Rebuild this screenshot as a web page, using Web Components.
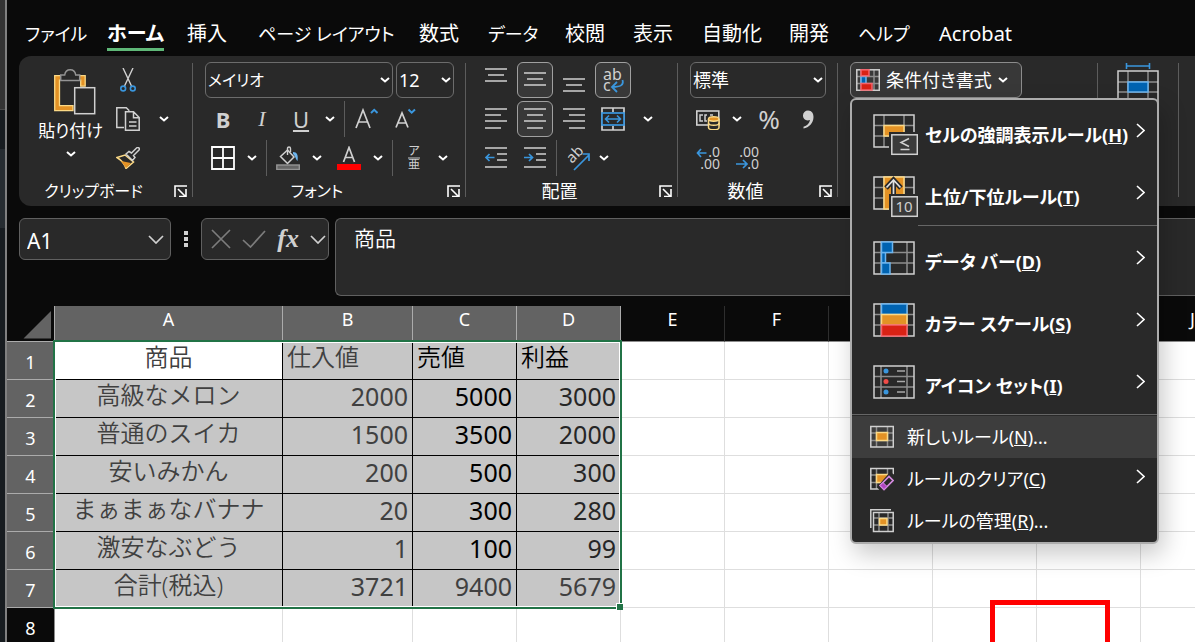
<!DOCTYPE html>
<html lang="ja">
<head>
<meta charset="utf-8">
<title>商品 - 表計算</title>
<style>
  html, body { margin: 0; height: 100%; overflow: hidden; background: #0a0a0a; }
  body { font-family: "Noto Sans", "Noto Sans CJK JP", sans-serif; font-feature-settings: "palt"; color: #fff; }
</style>
</head>
<body>
<sheet-window></sheet-window>
<script>
const G = '#d0d0d0', B = '#3a96dd';
const lines = list => `<path stroke="${G}" stroke-width="1.5" fill="none" d="${list.map(([x, y, w]) => `M${x} ${y}h${w}`).join('')}"/>`;
const grid = (x, y, w, h, cols, rows) =>
  `<path stroke="#8d8d8d" stroke-width="1.5" fill="none" d="${cols.map(c => `M${c} ${y}v${h}`).join('')}${rows.map(r => `M${x} ${r}h${w}`).join('')}"/>` +
  `<rect x="${x}" y="${y}" width="${w}" height="${h}" fill="none" stroke="${G}" stroke-width="1.5"/>`;
const box = (x, y, w, h, f, s) => `<rect x="${x}" y="${y}" width="${w}" height="${h}" fill="${f}" stroke="${s}" stroke-width="1.5"/>`;
const OR = '#e39225', OL = '#fbd986', BL = '#0063b1', BLL = '#6db5ee', RD = '#d92215', RL = '#f4646c';

const ICONS = {
  chevron: [10, 6, `<path d="M1 1l4 3.500 4-3.500" fill="none" stroke="#fff" stroke-width="2"/>`],
  chevronWide: [16, 9, `<path d="M1 1l7 7 7-7" fill="none" stroke="#d0d0d0" stroke-width="1.700"/>`],
  chevronRight: [9, 15, `<path d="M1 1l7 6.500L1 14" fill="none" stroke="#fff" stroke-width="1.600"/>`],
  launcher: [13, 12, `<path d="M1 12V1h12" fill="none" stroke="#fff" stroke-width="1.600"/><path d="M4 4l7 7M12 4v7.500H5" fill="none" stroke="#fff" stroke-width="1.600"/>`],
  paste: [50, 46, `<g transform="translate(8)"><path d="M.7 6.700h30.500v10.500h-4.500v-6H5.500v25.500H19v5H.7z" fill="${OR}" stroke="${OL}" stroke-width="1.300"/><path d="M6.700 11.500V6h4c1-7 10-7 11 0h4v5.500z" fill="#292929" stroke="#949494" stroke-width="1.500"/><rect x="20.700" y="18.700" width="20" height="26" fill="#292929" stroke="${G}" stroke-width="1.500"/></g>`],
  cut: [16, 24, `<path d="M3 0l8.500 18M13 0L4.500 18" stroke="${G}" stroke-width="1.400" fill="none"/><circle cx="3.200" cy="20.500" r="2.400" fill="none" stroke="${B}" stroke-width="1.600"/><circle cx="12.800" cy="20.500" r="2.400" fill="none" stroke="${B}" stroke-width="1.600"/>`],
  copy: [24, 24, `<path d="M8 20.500H.8V.8h9.500l3 3" fill="none" stroke="${G}" stroke-width="1.500"/><path d="M9.500 4.800h8l5.700 5.700v12.700H9.500zM17.500 4.800v6h5.700M13 15h7.500M13 19h7.500" fill="none" stroke="${G}" stroke-width="1.500"/>`],
  brush: [24, 22, `<path d="M1 10.500L9 8l8.500 7L10 21.500C9 18 5 13 1 10.500z" fill="#292929" stroke="${OL}" stroke-width="1.500"/><path d="M5 14l10 2-5 5z" fill="${OR}"/><path d="M10 7l3-2.500 2.500 1.500 5-5c2-1.500 3.500.5 2.500 2l-5.500 5.500 1.500 2-2.500 3z" fill="#292929" stroke="${G}" stroke-width="1.500"/>`],
  borders: [24, 24, `<path d="M1 1h22v22H1zM12 1v22M1 12h22" fill="none" stroke="#fff" stroke-width="1.800"/>`],
  bucket: [24, 24, `<path d="M4.500 10.500l7-6.500 6.500 7-6.500 6.500z" fill="none" stroke="${G}" stroke-width="1.500"/><path d="M11.500 9V2.500C11.500.5 14.500.5 14.500 2.500V6" fill="none" stroke="${G}" stroke-width="1.400"/><path d="M17 6c4 0 5.500 3 4.500 9-2-2-1.500-4-4.500-7z" fill="#6db5ee"/><rect x=".8" y="19" width="22.500" height="4.500" fill="#666" stroke="#949494" stroke-width="1.400"/>`],
  fontColor: [24, 24, `<path d="M6.500 16L12 1.500 17.500 16M8.500 11.500h7" fill="none" stroke="${G}" stroke-width="1.700"/><rect x="0" y="18" width="24" height="6" fill="#f00"/>`],
  grow: [24, 24, `<path d="M2 21L9 3l7 18M4.500 15h9" fill="none" stroke="${G}" stroke-width="1.700"/><path d="M17 6l3.200-3.200L23.500 6" fill="none" stroke="${B}" stroke-width="2"/>`],
  shrink: [24, 24, `<path d="M3 20.500L9 6l6 14.500M5 16h8" fill="none" stroke="${G}" stroke-width="1.700"/><path d="M15.500 2.500l3.200 3.200L22 2.500" fill="none" stroke="${B}" stroke-width="2"/>`],
  phonetic: [16, 26, `<text x="8" y="10" text-anchor="middle" font-size="12" fill="${G}">ア</text><path d="M2 13h12" stroke="#949494" stroke-width="1.500"/><text x="8" y="24" text-anchor="middle" font-size="12" fill="${G}">亜</text>`],
  top: [24, 24, lines([[1, 1, 22], [4, 7, 16], [1, 13, 22]])],
  middle: [24, 24, lines([[1, 5, 22], [4, 11, 16], [1, 17, 22]])],
  bottom: [24, 24, lines([[1, 11, 22], [4, 17, 16], [1, 23, 22]])],
  left: [24, 24, lines([[1, 2, 22], [1, 8, 16], [1, 14, 22], [1, 21, 16]])],
  center: [24, 24, lines([[1, 2, 22], [4, 8, 16], [1, 14, 22], [4, 21, 16]])],
  right: [24, 24, lines([[1, 2, 22], [7, 8, 16], [1, 14, 22], [7, 21, 16]])],
  outdent: [24, 24, lines([[1, 2, 22], [13, 8, 10], [13, 14, 10], [1, 21, 22]]) + `<path d="M10.500 11.500H2M5.500 8L2 11.500 5.500 15" fill="none" stroke="${B}" stroke-width="1.700"/>`],
  indent: [24, 24, lines([[1, 2, 22], [13, 8, 10], [13, 14, 10], [1, 21, 22]]) + `<path d="M1 11.500h8.500M6 8l3.500 3.500L6 15" fill="none" stroke="${B}" stroke-width="1.700"/>`],
  wrap: [24, 26, `<text x="2" y="13" font-size="16" fill="${G}">ab</text><text x="2" y="24" font-size="16" fill="${G}">c</text><path d="M21.500 13c1.500 5-2 7-10 7M16 15l-5 5 5 5" fill="none" stroke="${B}" stroke-width="1.800"/>`],
  merge: [24, 24, `<path d="M1 1h22v22H1zM12 1v4M12 19v4" fill="none" stroke="${G}" stroke-width="1.700"/><rect x="1" y="6" width="22" height="12" fill="#292929" stroke="${B}" stroke-width="1.700"/><path d="M4.500 12h15M8 8.500L4.500 12 8 15.500M16 8.500l3.500 3.500-3.500 3.500" fill="none" stroke="${B}" stroke-width="1.600"/>`],
  orient: [28, 26, `<text transform="translate(8 19) rotate(-45)" font-size="15" fill="${G}">ab</text><path d="M10 25L25 10M18.500 9H25v7" fill="none" stroke="${B}" stroke-width="1.700"/>`],
  money: [24, 22, `<rect x=".8" y="3" width="22" height="14" fill="none" stroke="${G}" stroke-width="1.600"/><path d="M7 7H4v6h3M11 7H9v6h2M14 7h3" fill="none" stroke="${G}" stroke-width="1.500"/><path d="M12.500 11v8.500c0 3 10.500 3 10.500 0V11" fill="#292929" stroke="${OL}" stroke-width="1.500"/><path d="M12.500 15c0 3 10.500 3 10.500 0" fill="none" stroke="${OL}" stroke-width="1.500"/><ellipse cx="17.700" cy="11" rx="5.200" ry="2.200" fill="${OR}" stroke="${OL}" stroke-width="1.500"/>`],
  comma: [14, 20, `<path d="M2 6.500a5 5 0 0 1 5-5c4 0 5.500 3 5.500 6.500 0 6-4.500 10.500-10 11.500v-1.700c3.500-1.300 6-3.500 6.500-6.800C5 12.500 2 10 2 6.500z" fill="${G}"/>`],
  moreDec: [24, 26, `<path d="M10.500 8H1.500M5 4L1.500 8 5 12" fill="none" stroke="${B}" stroke-width="1.700"/><text x="24" y="12" text-anchor="end" font-size="14" fill="${G}">.0</text><text x="24" y="24" text-anchor="end" font-size="14" fill="${G}">.00</text>`],
  lessDec: [24, 26, `<path d="M1 19h10.500M8 15l4 4-4 4" fill="none" stroke="${B}" stroke-width="1.700"/><text x="24" y="12" text-anchor="end" font-size="14" fill="${G}">.00</text><text x="24" y="24" text-anchor="end" font-size="14" fill="${G}">.0</text>`],
  condFormat: [24, 22, grid(.8, .8, 22.500, 20.500, [5, 18], [7.500, 14.500]) + box(5, 7.500, 5, 7, BL, BLL) + box(5, .8, 8, 6, RD, RL) + box(5, 14.500, 11, 6.500, RD, RL)],
  cellFormat: [42, 46, `<path d="M9.500 3h23M9.500 0v6M32.500 0v6" stroke="${B}" stroke-width="1.600" fill="none"/>` + grid(1, 8, 40, 38, [11, 31], [19, 29]) + box(11, 19, 20, 10, BL, BLL)],
  ruleHighlight: [45, 42, grid(1, 1, 40, 32, [11, 31], [11.500, 22]) + box(11, 11.500, 20, 10.500, OR, OL) + `<rect x="16" y="18" width="29" height="24" fill="#292929"/>` + box(18.800, 20.800, 25.500, 19.500, '#3a3a3a', G) + `<path d="M36 24.500l-8 4 8 4M27.500 35.500h9" fill="none" stroke="${G}" stroke-width="1.500"/>`],
  ruleTop: [45, 42, grid(1, 1, 40, 32, [11, 31], [11.500, 22]) + box(11, 1, 20, 32, OR, OL) + `<path d="M20.500 20V4M13 12l7.500-8 7.500 8" fill="none" stroke="#292929" stroke-width="5"/><path d="M20.500 20V4M13.500 11.500l7-7.500 7 7.500" fill="none" stroke="#e0e0e0" stroke-width="1.700"/><rect x="16" y="18" width="29" height="24" fill="#292929"/>` + box(18.800, 20.800, 25.500, 19.500, '#3a3a3a', G) + `<text x="31" y="36" text-anchor="middle" font-size="15" fill="${G}">10</text>`],
  dataBar: [45, 42, grid(1, 1, 40, 32, [8, 34], [11.500, 22]) + box(8.500, 11.500, 4, 10.500, BL, BLL) + box(8.500, 1, 11, 10.500, BL, BLL) + box(8.500, 22, 8.500, 11, BL, BLL)],
  colorScale: [45, 42, grid(1, 1, 40, 32, [8, 34], [11.500, 22]) + box(8.500, 1, 25.500, 10.500, BL, BLL) + box(8.500, 11.500, 25.500, 10.500, OR, OL) + box(8.500, 22, 25.500, 11, RD, RL)],
  iconSet: [45, 42, grid(1, 1, 40, 32, [8, 34], [11.500, 22]) + `<circle cx="13" cy="6" r="2.500" fill="${B}"/><circle cx="13" cy="16.500" r="2.500" fill="#f04c48"/><circle cx="13" cy="27" r="2.500" fill="${B}"/><path d="M24 6h8M24 16.500h8M24 27h8" stroke="#a8a8a8" stroke-width="1.500"/>`],
  ruleNew: [24, 24, grid(.8, 1.500, 22.500, 20.500, [6.500, 17.500], [8, 15.500]) + box(6.500, 7.500, 11, 8, OR, OL)],
  ruleClear: [24, 24, grid(.8, 1.500, 22.500, 20.500, [6.500, 17.500], [8, 15.500]) + box(6.500, 7.500, 11, 8, OR, OL) + `<path d="M7 20L20 5l5 3v16H10z" fill="#292929"/><path d="M10 18.500L19 9.500l4 4-9 9z" fill="none" stroke="#d58be0" stroke-width="1.600"/><path d="M10 18.500l3-3 4 4-3 3z" fill="#b146c2" stroke="#d58be0"/>`],
  ruleManage: [24, 24, `<path d="M.8 19V.8H21" fill="none" stroke="${G}" stroke-width="1.500"/>` + grid(3.500, 3.500, 19.700, 19, [9, 18], [9, 16]) + box(9.500, 9.500, 7.500, 6.500, OR, OL)],
  cancel: [20, 20, `<path d="M1 1l18 18M19 1L1 19" stroke="#7c7c7c" stroke-width="1.700"/>`],
  accept: [24, 18, `<path d="M1 10l7.500 7L23 1" fill="none" stroke="#7c7c7c" stroke-width="1.700"/>`],
  dots: [4, 18, `<path d="M0 1h4v4H0zM0 7h4v4H0zM0 13h4v4H0z" fill="${G}"/>`]
};

function define(name, render) {
  customElements.define(name, class extends HTMLElement {
    connectedCallback() {
      if (this.shadowRoot) return;
      const t = document.createElement('template');
      t.innerHTML = render(this);
      this.attachShadow({ mode: 'open' }).append(t.content.cloneNode(true));
    }
  });
}

define('ui-icon', el => {
  const [w, h, art] = ICONS[el.getAttribute('name')];
  return `<style>:host{display:inline-flex;flex:none}svg{display:block}text{font-family:"Noto Sans","Noto Sans CJK JP",sans-serif;font-weight:400}</style>
  <svg width="${w}" height="${h}" viewBox="0 0 ${w} ${h}" aria-hidden="true">${art}</svg>`;
});

define('tool-button', el => `<style>
  :host{display:inline-flex;flex:none}
  button{box-sizing:border-box;width:var(--button-width,36px);height:36px;padding:0;border:1px solid transparent;border-radius:6px;background:none;color:#d0d0d0;font:inherit;font-size:22px;line-height:30px;display:flex;align-items:center;justify-content:center}
  :host([pressed]) button{background:#383838;border-color:#a0a0a0}
  :host([arrow]){--button-width:22px}
  </style><button type="button" aria-label="${el.getAttribute('label')}"><slot></slot></button>`);

define('combo-box', el => `<style>
  :host{display:grid;align-items:center}
  select{grid-area:1/1;appearance:none;box-sizing:border-box;width:100%;height:36px;padding:0 0 0 2px;border:1px solid #6c6c6c;border-radius:6px;background:#292929;color:#fff;font:inherit;font-size:var(--size,18px);font-feature-settings:inherit}
  ui-icon{grid-area:1/1;justify-self:end;margin-right:3px;pointer-events:none}
  </style><select aria-label="${el.getAttribute('label')}"><option>${el.getAttribute('value')}</option></select><ui-icon name="chevron"></ui-icon>`);

define('tool-row', () => `<style>:host{display:flex;gap:3px;height:36px;align-items:center}</style><slot></slot>`);
define('tool-split', () => `<style>:host{display:flex}</style><slot></slot>`);
define('tool-rule', () => `<style>:host{display:block;width:1px;height:36px;background:#5c5c5c}</style>`);

define('ribbon-group', el => {
  const label = el.getAttribute('label');
  return `<style>
  :host{display:flex;flex-direction:column;box-sizing:border-box;margin:7px 0 9px;border-right:1px solid #5c5c5c;width:var(--group-width)}
  .body{flex:1;display:flex;flex-direction:column;gap:3px;margin-top:-1px;padding-left:12px}
  footer{display:grid;grid-template-columns:1fr 24px;height:20px;align-items:center;text-align:center;font-size:var(--label,18px);line-height:20px;margin-bottom:-4px;white-space:nowrap}
  button{padding:0;border:0;background:none;display:flex;justify-content:center}
  </style><div class="body"><slot></slot></div>
  ${label ? `<footer><span>${label}</span><button type="button" aria-label="${label}の設定"><ui-icon name="launcher"></ui-icon></button></footer>` : ''}`;
});

define('clipboard-tools', () => `<style>
  :host{display:grid;grid-template-columns:79px 36px 36px;column-gap:0;align-items:center}
  .paste{align-self:start;border:0;padding:7px 0 0;background:none;color:#fff;font:inherit;font-size:17px;font-feature-settings:inherit;line-height:24px;display:flex;flex-direction:column;align-items:center;white-space:nowrap}
  .paste span{margin:4px 0 8px}
  .col{display:grid;gap:3px}
  </style>
  <button class="paste" type="button"><ui-icon name="paste"></ui-icon><span>貼り付け</span><ui-icon name="chevron"></ui-icon></button>
  <div class="col"><tool-button label="切り取り"><ui-icon name="cut"></ui-icon></tool-button><tool-button label="コピー"><ui-icon name="copy"></ui-icon></tool-button><tool-button label="書式のコピー"><ui-icon name="brush"></ui-icon></tool-button></div>
  <tool-button label="コピーのオプション"><ui-icon name="chevron"></ui-icon></tool-button>`);

define('ribbon-tabs', () => {
  const tabs = [['ファイル', 'kana'], ['ホーム', 'on'], ['挿入', ''], ['ページ レイアウト', 'kana'], ['数式', ''], ['データ', 'kana'], ['校閲', ''], ['表示', ''], ['自動化', ''], ['開発', ''], ['ヘルプ', 'kana'], ['Acrobat', '']];
  return `<style>
  :host{display:block;padding:17px 0 5px 18px}
  nav{display:grid;grid-template-columns:82px 80px 71px 161px 69px 77px 68px 69px 87px 69px 81px 1fr}
  button{justify-self:start;box-sizing:border-box;border:0;border-bottom:3px solid transparent;padding:3px 0 0;background:none;color:#fff;font:inherit;font-feature-settings:inherit;font-size:20px;line-height:28px;height:34px;white-space:nowrap}
  .kana{font-size:18px}
  .on{font-weight:700;border-color:#5fb878}
  </style><nav role="tablist">${tabs.map(([t, c]) => `<button type="button" role="tab" class="${c}" aria-selected="${c === 'on'}">${t}</button>`).join('')}</nav>`;
});

define('ribbon-bar', () => {
  const b = (icon, label, pressed) => `<tool-button label="${label}" ${pressed ? 'pressed' : ''}><ui-icon name="${icon}"></ui-icon></tool-button>`;
  const arrow = w => `<tool-button arrow ${w ? `style="--button-width:${w}px"` : ''} label="その他"><ui-icon name="chevron"></ui-icon></tool-button>`;
  return `<style>
  :host{display:flex;margin-left:12px;height:150px;border-radius:12px 0 0 12px;background:#292929;overflow:hidden}
  ribbon-group{flex:none}
  i{font-family:"Liberation Serif",serif}
  .percent{font-size:26px}
  .cond{box-sizing:border-box;width:172px;height:36px;border:1px solid #8c8c8c;border-radius:6px;background:#383838;color:#fff;font:inherit;font-feature-settings:inherit;font-size:18px;line-height:32px;padding:0 0 0 5px;display:flex;align-items:center;gap:6px;white-space:nowrap}
  .cellfmt{margin-left:7px;margin-top:1px}
  </style>
  <ribbon-group style="--group-width:174px;--label:16px" label="クリップボード"><clipboard-tools></clipboard-tools></ribbon-group>
  <ribbon-group style="--group-width:273px;--label:16px" label="フォント">
    <tool-row><combo-box style="width:188px;--size:16px" label="フォント" value="メイリオ"></combo-box><combo-box style="width:58px" label="フォント サイズ" value="12"></combo-box></tool-row>
    <tool-row><tool-button label="太字"><b>B</b></tool-button><tool-button label="斜体"><i>I</i></tool-button><tool-split><tool-button label="下線"><u>U</u></tool-button>${arrow()}</tool-split><tool-rule></tool-rule>${b('grow', 'フォント サイズの拡大')}${b('shrink', 'フォント サイズの縮小')}</tool-row>
    <tool-row><tool-split>${b('borders', '罫線')}${arrow()}</tool-split><tool-rule></tool-rule><tool-split>${b('bucket', '塗りつぶしの色')}${arrow()}</tool-split><tool-split>${b('fontColor', 'フォントの色')}${arrow()}</tool-split><tool-rule></tool-rule><tool-split>${b('phonetic', 'ふりがなの表示')}${arrow()}</tool-split></tool-row>
  </ribbon-group>
  <ribbon-group style="--group-width:212px" label="配置">
    <tool-row>${b('top', '上揃え')}${b('middle', '上下中央揃え', 1)}${b('bottom', '下揃え')}${b('wrap', '折り返して全体を表示する', 1)}</tool-row>
    <tool-row>${b('left', '左揃え')}${b('center', '中央揃え', 1)}${b('right', '右揃え')}<tool-split>${b('merge', 'セルを結合して中央揃え')}${arrow(34)}</tool-split></tool-row>
    <tool-row>${b('outdent', 'インデントを減らす')}${b('indent', 'インデントを増やす')}<tool-rule></tool-rule><tool-split>${b('orient', '方向')}${arrow(16)}</tool-split></tool-row>
  </ribbon-group>
  <ribbon-group style="--group-width:160px" label="数値">
    <tool-row><combo-box style="width:136px" label="表示形式" value="標準"></combo-box></tool-row>
    <tool-row><tool-split>${b('money', '通貨表示形式')}${arrow()}</tool-split><tool-button label="パーセント スタイル"><span class="percent">%</span></tool-button>${b('comma', '桁区切りスタイル')}</tool-row>
    <tool-row>${b('moreDec', '小数点以下の表示桁数を増やす')}${b('lessDec', '小数点以下の表示桁数を減らす')}</tool-row>
  </ribbon-group>
  <ribbon-group style="--group-width:260px"><button class="cond" type="button" aria-haspopup="menu" aria-expanded="true"><ui-icon name="condFormat"></ui-icon><span>条件付き書式</span><ui-icon name="chevron"></ui-icon></button></ribbon-group>
  <ribbon-group style="--group-width:81px"><ui-icon class="cellfmt" name="cellFormat"></ui-icon></ribbon-group>`;
});

define('formula-bar', () => `<style>
  :host{display:flex;align-items:flex-start;margin:12px 0 10px 12px}
  .box{box-sizing:border-box;height:42px;border:1px solid #606060;border-radius:6px;background:#292929;display:flex;align-items:center}
  .name{width:152px;padding:0 6px 0 7px}
  input{flex:1;min-width:0;border:0;padding:4px 0 0;background:none;color:#fff;font:inherit;font-size:21px;height:36px;outline:0}
  .grip{width:30px;height:42px;display:flex;align-items:center;justify-content:center}
  .fx{width:128px;padding:0 2px 0 9px;margin-right:6px;justify-content:space-between}
  button{border:0;padding:0;background:none;color:#d0d0d0;display:flex}
  .fn{font:italic 700 26px/36px "Liberation Serif",serif}
  textarea{flex:1;min-width:0;box-sizing:border-box;height:78px;resize:none;border:1px solid #606060;border-right:0;border-radius:6px 0 0 6px;background:#292929;color:#fff;font:inherit;font-size:21px;line-height:30px;padding:4px 18px;outline:0;font-weight:350}
  </style>
  <div class="box name"><input aria-label="名前ボックス" value="A1"><ui-icon name="chevronWide"></ui-icon></div>
  <div class="grip"><ui-icon name="dots"></ui-icon></div>
  <div class="box fx"><button type="button" aria-label="キャンセル"><ui-icon name="cancel"></ui-icon></button><button type="button" aria-label="入力"><ui-icon name="accept"></ui-icon></button><button type="button" class="fn">fx</button><button type="button" aria-label="展開"><ui-icon name="chevronWide"></ui-icon></button></div>
  <textarea aria-label="数式バー">商品</textarea>`);

define('cell-grid', () => {
  const cols = 'ABCDEFGHIJ'.split('');
  const data = [['商品', '仕入値', '売値', '利益'], ['高級なメロン', 2000, 5000, 3000], ['普通のスイカ', 1500, 3500, 2000], ['安いみかん', 200, 500, 300], ['まぁまぁなバナナ', 20, 300, 280], ['激安なぶどう', 1, 100, 99], ['合計(税込)', 3721, 9400, 5679], []];
  const tone = (r, c) => (c >= 2 && r === 0) || (c === 2 && r < 6) ? 'dark' : c === 3 && r < 6 ? 'mid' : '';
  return `<style>
  :host{display:block;position:relative;flex:1;overflow:hidden}
  table{table-layout:fixed;width:1238px;border-collapse:separate;border-spacing:0;font-feature-settings:normal}
  .rh{width:48px}.ca{width:228px}.cb{width:130px}
  th,td{box-sizing:border-box;padding:0;white-space:nowrap;overflow:hidden;vertical-align:top}
  th{font-weight:400;font-size:18px;color:#fff;background:#0a0a0a}
  thead th{height:36px;line-height:26px;border-right:1px solid #2e2e2e;border-bottom:1px solid #8c8c8c}
  tbody th{height:38px;line-height:32px;padding-top:4px;border-right:1px solid #8c8c8c;border-bottom:1px solid #3c3c3c}
  th.sel{background:#636363}
  thead th.sel{border-right-color:#ababab}
  tbody th.sel{border-bottom-color:#ababab}
  thead th.corner{border-right-color:#ababab;border-bottom-color:#ababab}
  .corner svg{display:block;margin:5px 0 0 16px}
  td{background:#fff;border-right:1px solid #dedede;border-bottom:1px solid #dedede;color:#404040;font-size:24px;line-height:30px}
  td.sel{background:#c6c6c6;border-color:#000;padding:0 4px}
  td.active{background:#fff}
  td.name{text-align:center;font-weight:350}
  td.head{font-weight:350}
  td.num{text-align:right;font-size:25px;line-height:32px}
  td.dark{color:#000}td.mid{color:#262626}
  .range{position:absolute;left:46px;top:34px;width:569px;height:269px;box-sizing:border-box;border:2px solid #217346;box-shadow:inset 0 0 0 1px #fff;pointer-events:none}
  .range::after{content:"";position:absolute;right:-3px;bottom:-3px;width:6px;height:6px;background:#217346;border:solid #fff;border-width:1px 0 0 1px}
  .mark{position:absolute;left:983px;top:294px;width:120px;height:100px;box-sizing:border-box;border:5px solid #f00}
  </style>
  <table><colgroup><col class="rh"><col class="ca"><col class="cb">${'<col>'.repeat(8)}</colgroup>
  <thead><tr><th class="corner"><svg width="28" height="28" aria-hidden="true"><path d="M28 0v27.500H.5z" fill="#636363"/></svg></th>${cols.map((c, i) => `<th scope="col" class="${i < 4 ? 'sel' : ''}">${c}</th>`).join('')}</tr></thead>
  <tbody>${data.map((row, r) => `<tr><th scope="row" class="${r < 7 ? 'sel' : ''}">${r + 1}</th>${cols.map((_, c) => {
    if (c > 3 || r > 6) return '<td></td>';
    const kind = c === 0 ? 'name' : r === 0 ? 'head' : 'num';
    return `<td class="sel ${kind} ${tone(r, c)} ${r + c === 0 ? 'active' : ''}">${row[c]}</td>`;
  }).join('')}</tr>`).join('')}</tbody></table>
  <div class="range"></div><div class="mark"></div>`;
});

define('menu-item', el => `<style>
  :host{display:block}
  button{box-sizing:border-box;width:100%;height:62px;border:0;background:none;color:#fff;font:inherit;font-feature-settings:inherit;font-size:18px;font-weight:700;display:flex;align-items:flex-start;gap:7px;padding:14px 12px 0 21px;white-space:nowrap;text-align:left}
  span{flex:1;line-height:28px;padding-top:7px}
  .go{margin-top:9px}
  :host([small]) button{height:42px;font-weight:400;align-items:center;gap:13px;padding:0 12px 0 18px}
  :host([small]) span{padding:0}
  :host([small]) .go{margin:0 0 5px}
  :host([current]) button{background:#3d3d3d}
  </style><button type="button" role="menuitem"><ui-icon name="${el.getAttribute('icon')}"></ui-icon><span><slot></slot></span>${el.hasAttribute('sub') ? '<ui-icon class="go" name="chevronRight"></ui-icon>' : ''}</button>`);

define('format-menu', () => `<style>
  :host{display:block;box-sizing:border-box;width:309px;border:2px solid #acacac;border-radius:6px;background:#292929;box-shadow:4px 10px 24px rgba(0,0,0,.22);overflow:hidden}
  hr{height:1px;border:0;margin:1px 0;background:#666}
  .in{margin-left:66px}
  </style><div role="menu">
  <menu-item sub icon="ruleHighlight">セルの強調表示ルール(<u>H</u>)</menu-item>
  <menu-item sub icon="ruleTop">上位/下位ルール(<u>T</u>)</menu-item>
  <hr class="in">
  <menu-item sub icon="dataBar">データ バー(<u>D</u>)</menu-item>
  <menu-item sub icon="colorScale">カラー スケール(<u>S</u>)</menu-item>
  <menu-item sub icon="iconSet">アイコン セット(<u>I</u>)</menu-item>
  <hr>
  <menu-item small current icon="ruleNew">新しいルール(<u>N</u>)...</menu-item>
  <menu-item small sub icon="ruleClear">ルールのクリア(<u>C</u>)</menu-item>
  <menu-item small icon="ruleManage">ルールの管理(<u>R</u>)...</menu-item>
  </div>`);

define('sheet-window', () => `<style>
  :host{display:grid;grid-template-columns:5px 1fr;height:100%;overflow:hidden}
  .behind{background:linear-gradient(#333 0 109px,#4a4a4a 109px 110px,#171c20 110px 149px,#262c31 149px 228px,#171c20 228px)}
  main{position:relative;display:flex;flex-direction:column;min-width:0;border-left:2px solid #808080;overflow:hidden}
  format-menu{position:absolute;left:843px;top:98px}
  </style>
  <div class="behind"></div>
  <main><ribbon-tabs></ribbon-tabs><ribbon-bar></ribbon-bar><formula-bar></formula-bar><cell-grid></cell-grid><format-menu></format-menu></main>`);
</script>
</body>
</html>
